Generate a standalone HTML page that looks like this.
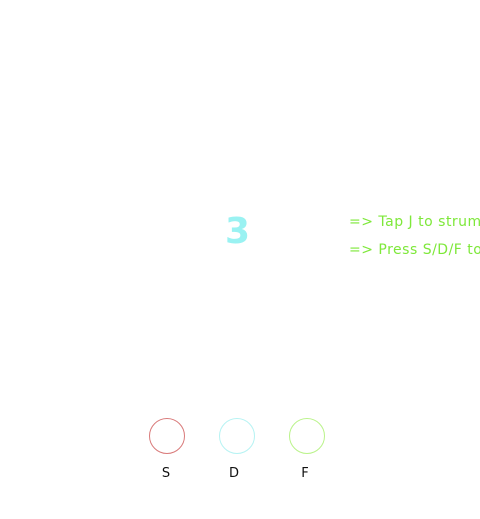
<!DOCTYPE html>
<html><head><meta charset="utf-8"><style>
html,body{margin:0;padding:0;background:#fff;}
body{width:480px;height:519px;position:relative;overflow:hidden;font-family:"Comic Sans MS","DejaVu Sans",sans-serif;}
.three{position:absolute;left:225px;top:208px;font-size:36px;color:#9af2f2;font-weight:bold;line-height:48px;}
.clip{position:absolute;left:349px;top:0;width:131px;height:300px;overflow:hidden;}
.t{position:absolute;left:0;font-size:14px;color:#7ee83a;white-space:nowrap;letter-spacing:0.5px;}
.c{position:absolute;top:418px;width:34px;height:34px;border-radius:50%;border:1.5px solid;box-sizing:content-box;}
.l{position:absolute;top:466px;font-size:13px;color:#111;width:20px;text-align:center;}
</style></head><body>
<div class="three">3</div>
<div class="clip">
<div class="t" style="top:214px">=&gt; Tap J to strum</div>
<div class="t" style="top:242px">=&gt; Press S/D/F to play</div>
</div>
<div class="c" style="left:149px;border-color:#d97a7a"></div>
<div class="c" style="left:219px;border-color:#b6f3f3"></div>
<div class="c" style="left:289px;border-color:#baf38a"></div>
<div class="l" style="left:156px">S</div>
<div class="l" style="left:224px">D</div>
<div class="l" style="left:295px">F</div>
</body></html>
